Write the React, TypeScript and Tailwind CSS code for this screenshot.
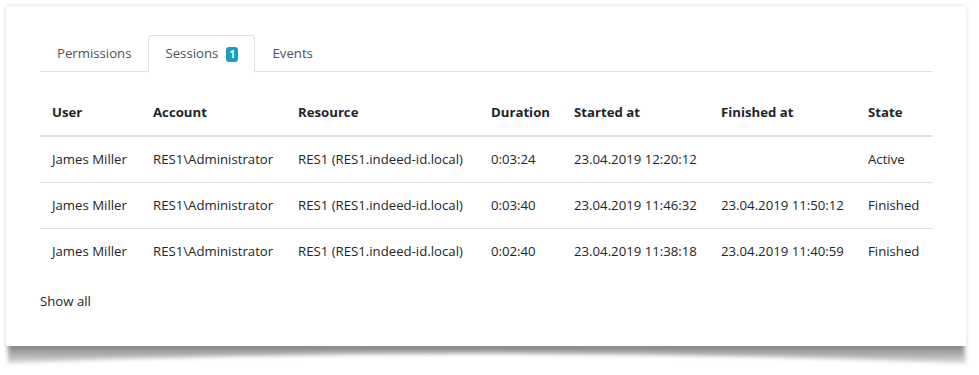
import React from "react";

const cols = [
  { label: "User", w: "w-[101px]" },
  { label: "Account", w: "w-[145px]" },
  { label: "Resource", w: "w-[193px]" },
  { label: "Duration", w: "w-[83px]" },
  { label: "Started at", w: "w-[147px]" },
  { label: "Finished at", w: "w-[147px]" },
  { label: "State", w: "w-[77px]" },
];

const rows = [
  ["James Miller", "RES1\\Administrator", "RES1 (RES1.indeed-id.local)", "0:03:24", "23.04.2019 12:20:12", "", "Active"],
  ["James Miller", "RES1\\Administrator", "RES1 (RES1.indeed-id.local)", "0:03:40", "23.04.2019 11:46:32", "23.04.2019 11:50:12", "Finished"],
  ["James Miller", "RES1\\Administrator", "RES1 (RES1.indeed-id.local)", "0:02:40", "23.04.2019 11:38:18", "23.04.2019 11:40:59", "Finished"],
];

export default function App() {
  return (
    <div
      className="relative w-[979px] h-[375px] bg-white overflow-hidden text-[#212529] text-[13.2px]"
      style={{ fontFamily: '"Open Sans", "Noto Sans", sans-serif' }}
    >
      <svg className="absolute left-0 top-[338px]" width="979" height="37" viewBox="0 0 979 37">
        <defs>
          <linearGradient id="sg" x1="0" y1="0" x2="0" y2="1">
            <stop offset="0" stopColor="#7d7d7d" />
            <stop offset="1" stopColor="#d8d8d8" />
          </linearGradient>
          <filter id="bl" x="-5%" y="-50%" width="110%" height="200%">
            <feGaussianBlur stdDeviation="2.2" />
          </filter>
        </defs>
        <path d="M8,6 L964,6 L966,25 Q486,6 8,25 Z" fill="url(#sg)" filter="url(#bl)" />
      </svg>
      <div className="relative mt-[6px] ml-[6px] w-[960px] h-[340px] bg-white shadow-[0_0_4px_rgba(0,0,0,0.18)] pt-[29px] px-[34px]">
        <div className="flex border-b border-[#dee2e6] h-[37px] w-[893px]">
          <div className="px-4 h-[38px] flex items-center text-[#495057] border border-transparent">Permissions</div>
          <div className="px-4 h-[38px] flex items-center text-[#495057] bg-white border border-[#dee2e6] border-b-white rounded-t-[4px] gap-2 w-[107px]">
            <span>Sessions</span>
            <span className="bg-[#17a2b8] text-white rounded-[3px] text-[10px] font-bold w-[14px] h-[15px] flex items-center justify-center leading-none">1</span>
          </div>
          <div className="px-4 h-[38px] flex items-center text-[#495057] border border-transparent">Events</div>
        </div>
        <div className="mt-[18px] w-[893px]">
          <div className="flex h-[47px] border-b-2 border-[#dee2e6] font-bold">
            {cols.map((c) => (
              <div key={c.label} className={`${c.w} px-3 flex items-center`}>{c.label}</div>
            ))}
          </div>
          {rows.map((r, i) => (
            <div key={i} className={`flex h-[46px] ${i < rows.length - 1 ? "border-b border-[#dee2e6]" : ""}`}>
              {r.map((v, j) => (
                <div key={j} className={`${cols[j].w} px-3 flex items-center whitespace-nowrap`}>{v}</div>
              ))}
            </div>
          ))}
        </div>
        <div className="mt-[16px] h-[21px] flex items-center">Show all</div>
      </div>
    </div>
  );
}
